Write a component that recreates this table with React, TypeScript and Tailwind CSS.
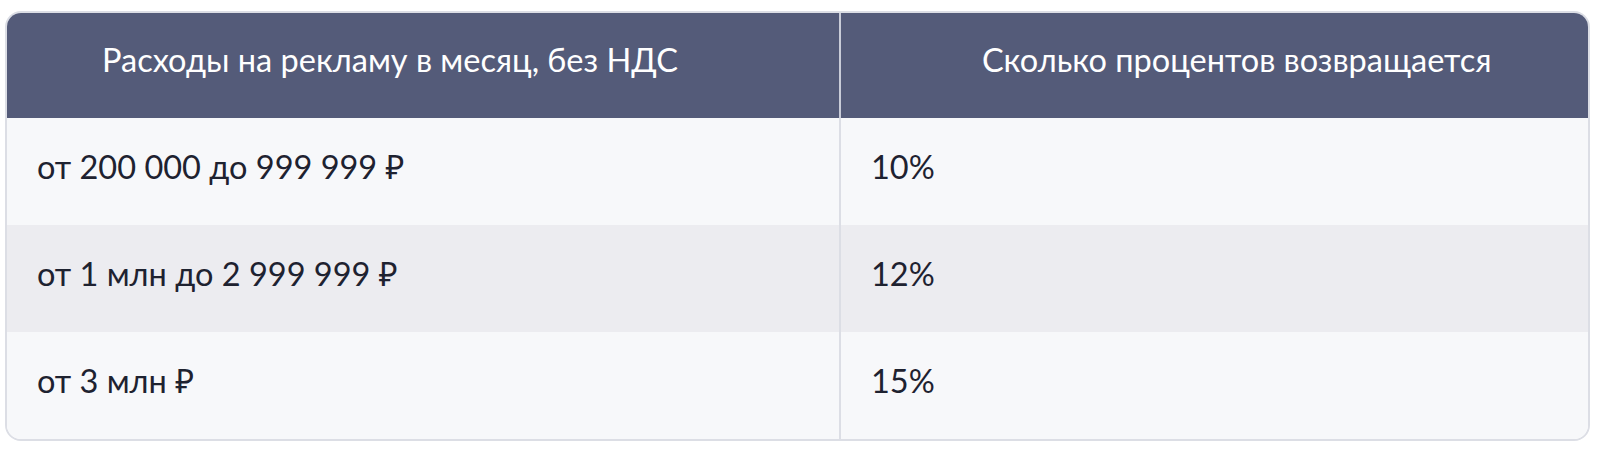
const rows = [
  { range: "от 200 000 до 999 999 ₽", pct: "10%", bg: "bg-[#f7f8fa]" },
  { range: "от 1 млн до 2 999 999 ₽", pct: "12%", bg: "bg-[#ececf0]" },
  { range: "от 3 млн ₽", pct: "15%", bg: "bg-[#f7f8fa]" },
];

export default function App() {
  return (
    <div className="h-[450px] w-[1600px] bg-white pl-[5px] pt-[11px]" style={{ fontFamily: "Lato, 'Noto Sans', sans-serif" }}>
      <div className="w-[1585px] overflow-hidden rounded-[16px] border-2 border-[#dcdee5]">
        <div className="grid grid-cols-[834px_1fr] bg-[#545b79] text-white">
          <div className="flex h-[105px] items-center border-r-2 border-[#c9ccd8] pb-[10px] pl-[95px] text-[32.5px]">
            Расходы на рекламу в месяц, без НДС
          </div>
          <div className="flex h-[105px] items-center pb-[10px] pl-[141px] text-[32.5px]">
            Сколько процентов возвращается
          </div>
        </div>
        {rows.map((r, i) => (
          <div key={i} className={`grid grid-cols-[834px_1fr] ${r.bg} text-[#1e2230]`}>
            <div className="flex h-[107px] items-center border-r-2 border-[#dcdee5] pb-[8px] pl-[30px] text-[32.5px]">
              {r.range}
            </div>
            <div className="flex h-[107px] items-center pb-[8px] pl-[30px] text-[32.5px]">{r.pct}</div>
          </div>
        ))}
      </div>
    </div>
  );
}
